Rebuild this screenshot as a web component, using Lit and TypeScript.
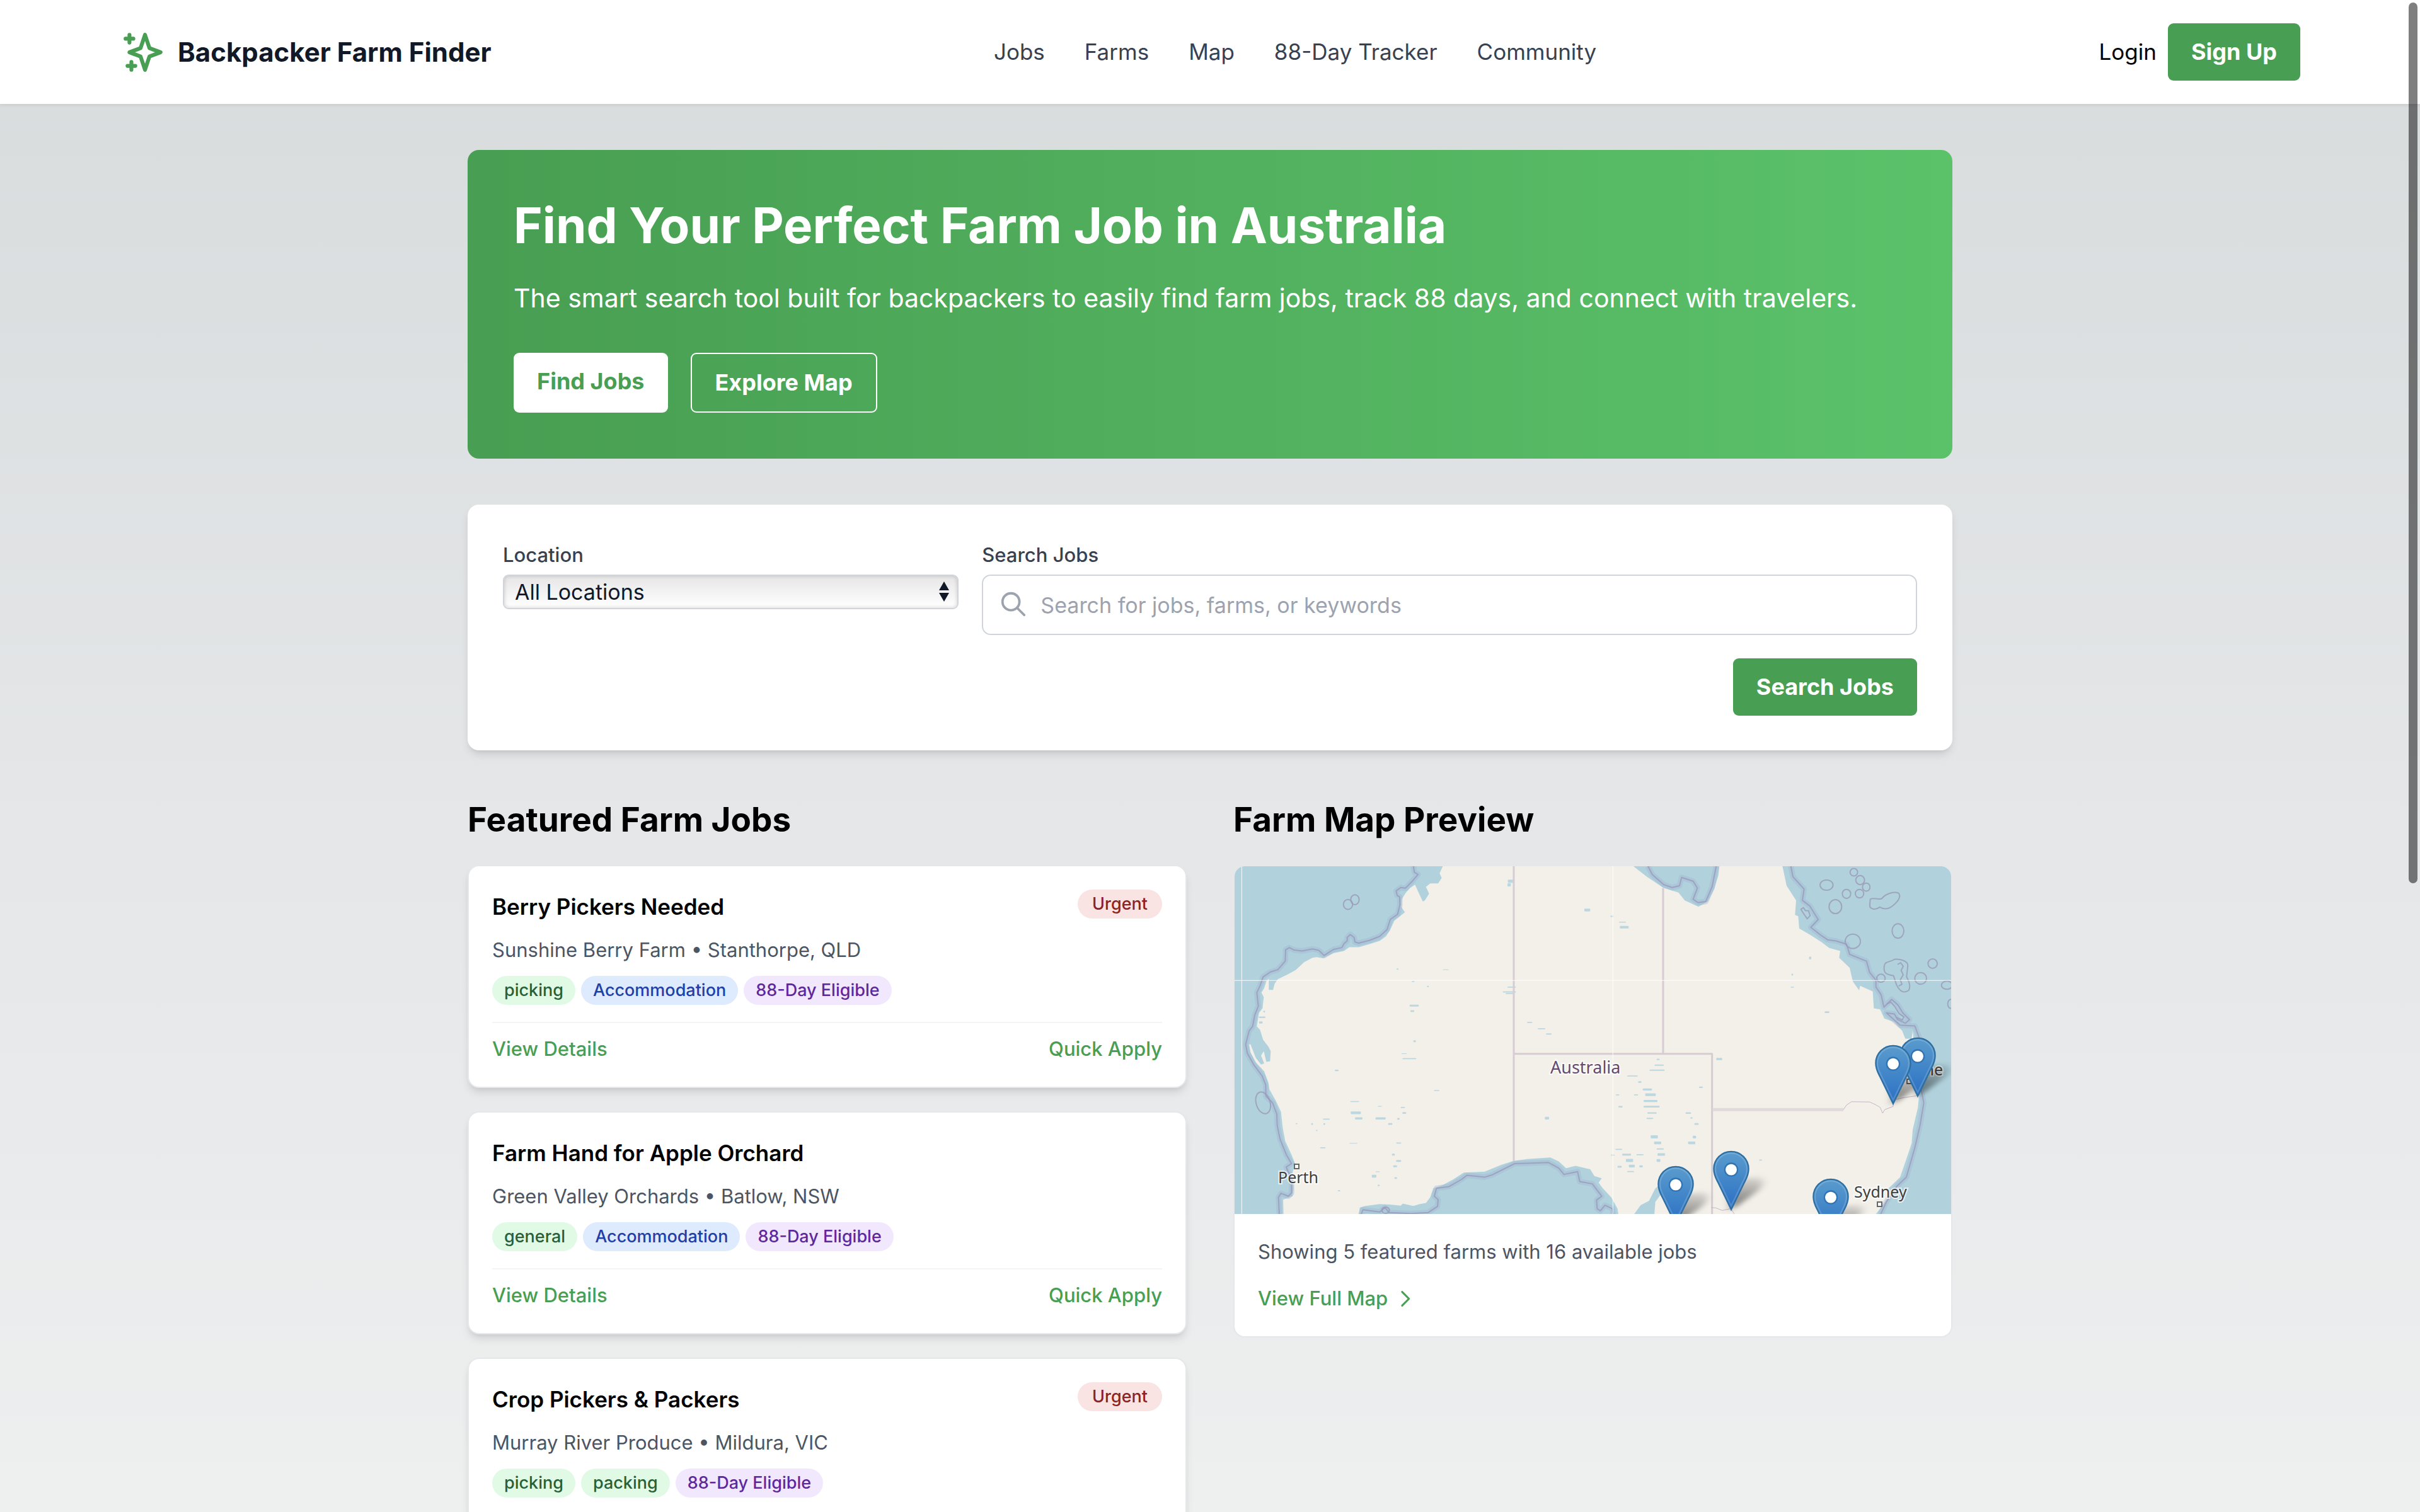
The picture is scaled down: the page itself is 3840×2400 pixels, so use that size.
import { LitElement, html, svg, css } from "lit";
import { customElement, property } from "lit/decorators.js";

type Tone = "green" | "blue" | "purple";

interface Job {
  title: string;
  farm: string;
  place: string;
  tags: { label: string; tone: Tone }[];
  urgent: boolean;
}

const JOBS: Job[] = [
  {
    title: "Berry Pickers Needed",
    farm: "Sunshine Berry Farm",
    place: "Stanthorpe, QLD",
    tags: [
      { label: "picking", tone: "green" },
      { label: "Accommodation", tone: "blue" },
      { label: "88-Day Eligible", tone: "purple" },
    ],
    urgent: true,
  },
  {
    title: "Farm Hand for Apple Orchard",
    farm: "Green Valley Orchards",
    place: "Batlow, NSW",
    tags: [
      { label: "general", tone: "green" },
      { label: "Accommodation", tone: "blue" },
      { label: "88-Day Eligible", tone: "purple" },
    ],
    urgent: false,
  },
  {
    title: "Crop Pickers & Packers",
    farm: "Murray River Produce",
    place: "Mildura, VIC",
    tags: [
      { label: "picking", tone: "green" },
      { label: "packing", tone: "green" },
      { label: "88-Day Eligible", tone: "purple" },
    ],
    urgent: true,
  },
];

const NAV = ["Jobs", "Farms", "Map", "88-Day Tracker", "Community"];

@customElement("site-header")
export class SiteHeader extends LitElement {
  static styles = css`
    :host {
      display: block;
      position: relative;
      background: #fff;
      box-shadow: 0 2px 5px rgba(0, 0, 0, 0.08);
    }
    .bar {
      display: flex;
      align-items: center;
      justify-content: space-between;
      padding: 37px 190px;
      font-size: 35px;
      line-height: 55px;
    }
    a {
      color: inherit;
      text-decoration: none;
    }
    .brand {
      display: flex;
      align-items: center;
      gap: 18px;
      font-size: 42px;
      font-weight: 700;
      color: #111827;
    }
    .brand svg {
      width: 74px;
      height: 74px;
      color: #489e52;
    }
    nav {
      display: flex;
      gap: 63px;
      color: #374151;
    }
    .account {
      display: flex;
      align-items: center;
      gap: 18px;
      color: #000;
    }
    .signup {
      padding: 18px 37px;
      border-radius: 9px;
      background: #489e52;
      color: #fff;
      font-size: 36px;
      font-weight: 700;
    }
  `;

  render() {
    return html`
      <header class="bar">
        <a class="brand" href="#">
          <svg viewBox="0 0 24 24" fill="none" stroke="currentColor" stroke-width="2" stroke-linecap="round" stroke-linejoin="round" aria-hidden="true">
            <path d="M5 3v4M3 5h4M6 17v4m-2-2h4m5-16l2.286 6.857L21 12l-5.714 2.143L13 21l-2.286-6.857L5 12l5.714-2.143L13 3z" />
          </svg>
          <span>Backpacker Farm Finder</span>
        </a>
        <nav>${NAV.map((item) => html`<a href="#">${item}</a>`)}</nav>
        <div class="account">
          <a href="#">Login</a>
          <a class="signup" href="#">Sign Up</a>
        </div>
      </header>
    `;
  }
}

@customElement("job-card")
export class JobCard extends LitElement {
  static styles = css`
    :host {
      display: block;
      padding: 37px;
      border: 2px solid #e5e7eb;
      border-radius: 18px;
      background: #fff;
      box-shadow: 0 9px 14px -2px rgba(0, 0, 0, 0.1), 0 5px 9px -5px rgba(0, 0, 0, 0.1);
    }
    .top {
      display: flex;
      align-items: flex-start;
      justify-content: space-between;
    }
    h3 {
      margin: 0 0 18px;
      font-size: 35px;
      line-height: 55px;
      font-weight: 600;
      color: #000;
    }
    .where {
      margin: 0 0 18px;
      font-size: 31px;
      line-height: 46px;
      color: #4b5563;
    }
    .tags {
      display: flex;
      gap: 9px;
    }
    .tag {
      padding: 0 19px;
      border-radius: 23px;
      font-size: 27px;
      line-height: 46px;
      font-weight: 500;
    }
    .urgent {
      padding: 0 23px;
      background: #fae3e3;
      color: #8f2222;
    }
    .green {
      background: #e1fae6;
      color: #276139;
    }
    .blue {
      background: #deeafd;
      color: #1e40a8;
    }
    .purple {
      background: #f1e8fe;
      color: #5e289c;
    }
    .actions {
      display: flex;
      justify-content: space-between;
      margin-top: 27px;
      padding-top: 18px;
      border-top: 2px solid #f3f4f6;
      font-size: 31px;
      line-height: 46px;
      font-weight: 500;
    }
    .actions a,
    .actions button {
      padding: 0;
      border: 0;
      background: none;
      font: inherit;
      color: #489e52;
      text-decoration: none;
      cursor: pointer;
    }
  `;

  @property({ attribute: false }) job!: Job;

  render() {
    const { title, farm, place, tags, urgent } = this.job;
    return html`
      <div class="top">
        <h3>${title}</h3>
        ${urgent ? html`<span class="tag urgent">Urgent</span>` : null}
      </div>
      <p class="where">${farm} • ${place}</p>
      <div class="tags">${tags.map((t) => html`<span class="tag ${t.tone}">${t.label}</span>`)}</div>
      <div class="actions">
        <a href="#">View Details</a>
        <button type="button">Quick Apply</button>
      </div>
    `;
  }
}

// Chart units: 3 per pixel across, 2.8 per pixel down, origin at (9, 8).
const LAND =
  "M1000 8 985 40 995 60 978 85 940 85 920 100 935 130 915 160 905 165 885 125 868 90 845 105 825 125 805 155 803 190 820 213 790 235 770 250 750 290 730 320 700 340 650 355 600 368 555 368 530 385 480 395 430 417 400 412 380 415 340 435 300 470 260 490 215 510 200 530 192 558 172 558 172 508 160 520 150 550 137 570 148 590 142 640 125 660 115 720 130 735 145 780 170 810 181 830 178 875 160 878 148 830 135 850 150 885 135 890 110 860 85 800 78 800 85 835 110 880 150 920 170 970 175 1000 205 1050 230 1100 238 1170 250 1230 280 1290 297 1330 285 1370 290 1440 285 1475 240 1490 242 1560 600 1560 605 1525 630 1518 700 1510 750 1512 800 1517 810 1508 860 1518 890 1510 920 1505 940 1480 955 1440 1000 1425 1050 1400 1100 1370 1200 1366 1227 1355 1280 1335 1337 1318 1402 1310 1512 1303 1552 1320 1587 1350 1632 1340 1702 1355 1722 1385 1757 1395 1742 1415 1762 1440 1802 1480 1832 1530 1837 1560 1907 1560 1942 1515 1982 1495 2012 1440 2032 1425 2052 1450 2012 1500 2007 1560 3057 1560 3082 1530 3112 1490 3122 1440 3177 1390 3207 1310 3232 1240 3237 1180 3262 1080 3267 1030 3262 1000 3242 900 3242 780 3237 740 3232 775 3202 775 3187 740 3147 700 3102 685 3082 645 3052 640 3047 565 3012 550 2987 540 2982 560 2952 520 2937 460 2887 415 2892 385 2840 372 2802 345 2752 315 2697 285 2692 230 2677 225 2682 160 2637 95 2617 8 2317 8 2312 50 2292 110 2262 165 2217 188 2152 160 2122 125 2052 105 1972 55 1907 8Z";

const SEA_LIMITS = [
  "M860 8 865 35 882 45 850 80 822 106 800 103 778 118 783 138 795 145 796 180 785 222 750 245 735 290 700 320 650 338 600 350 582 345 578 325 560 312 545 325 545 340 530 352 520 370 480 378 435 405 410 382 380 376 330 385 290 380 270 370 252 380 250 430 215 468 180 478 145 500 130 540 115 570 122 630 105 670 95 720 78 740 62 800 70 840 100 890 140 940 157 980 158 1030 190 1060 210 1110 212 1160 225 1220 255 1290 280 1330 255 1345 262 1362 280 1390 280 1460 265 1475 230 1462 218 1480 222 1560",
  "M610 1560 620 1535 700 1545 725 1525 745 1548 850 1552 930 1548 975 1520 978 1490 960 1475 970 1440 1030 1432 1090 1400 1115 1382 1200 1390 1235 1380 1342 1330 1420 1328 1502 1325 1552 1350 1577 1378 1642 1366 1652 1410 1712 1420 1757 1475 1732 1492 1735 1530 1750 1540 1772 1515 1807 1530 1812 1560",
  "M1977 8 1997 45 2052 90 2092 103 2127 95 2137 58 2192 75 2212 105 2192 155 2215 170 2252 165 2282 100 2302 8",
  "M2657 8 2667 55 2720 110 2712 160 2747 185 2787 245 2752 280 2800 315 2832 335 2872 340 2922 355 2937 400 3017 430 3032 480 3062 515 3062 545 3087 580 3100 635 3137 600 3167 625 3190 660 3222 690 3202 706 3165 690 3150 665 3112 660 3177 715 3247 718 3270 775 3277 1000 3290 1060 3272 1160 3247 1260 3207 1390 3162 1430 3112 1500 3082 1560",
];

// Reef and island outlines: cx, cy, rx, ry.
const REEFS: [number, number, number, number][] = [
  [2957, 35, 18, 17], [2987, 70, 21, 20], [3016, 101, 18, 18], [2984, 130, 20, 19],
  [2922, 131, 20, 20], [2827, 92, 31, 23], [2869, 188, 30, 31], [3167, 296, 28, 32],
  [2952, 342, 36, 32], [3086, 506, 20, 18], [3332, 441, 22, 21], [3275, 507, 28, 26],
  [3400, 537, 26, 18], [3418, 620, 14, 20], [549, 178, 22, 22], [582, 157, 20, 22],
  [728, 1537, 18, 14],
];

// Inland lakes: x, y, width, height.
const LAKES: [number, number, number, number][] = [
  [780, 463, 9, 5], [1000, 467, 28, 3], [852, 519, 14, 4], [925, 540, 9, 6], [842, 624, 44, 8],
  [846, 648, 18, 8], [860, 782, 12, 8], [803, 840, 26, 3], [808, 861, 66, 5], [486, 913, 18, 6],
  [560, 1052, 42, 4], [562, 1098, 48, 12], [582, 1124, 36, 10], [680, 1124, 48, 10], [690, 1074, 20, 3],
  [740, 1150, 20, 8], [800, 1078, 20, 5], [808, 1101, 18, 8], [783, 1127, 12, 8], [430, 1130, 32, 5],
  [432, 1150, 8, 8], [374, 1150, 8, 8], [300, 1150, 8, 5], [396, 1180, 8, 5], [416, 1257, 26, 5],
  [556, 1238, 38, 3], [778, 1236, 24, 5], [758, 1286, 14, 8], [778, 1314, 24, 8], [764, 1338, 18, 8],
  [770, 1390, 12, 8], [662, 1380, 22, 12], [680, 1364, 20, 4], [690, 1424, 10, 6], [500, 1448, 12, 5],
  [958, 1003, 26, 4], [124, 676, 32, 7], [126, 698, 16, 10], [146, 650, 8, 8],
  [1310, 68, 26, 14], [1308, 84, 16, 14], [1674, 197, 28, 12], [1798, 228, 16, 6], [1838, 255, 34, 4],
  [1843, 274, 42, 11], [1308, 543, 40, 5], [1286, 564, 62, 6], [1300, 572, 36, 5],
  [1402, 700, 24, 5], [1452, 728, 36, 5], [1492, 751, 26, 6], [1486, 1122, 20, 12],
  [2302, 860, 28, 10], [2018, 864, 14, 6], [2008, 890, 44, 5], [1984, 912, 72, 6], [1878, 938, 50, 5],
  [1930, 964, 16, 7], [1952, 996, 44, 9], [1964, 1018, 50, 12], [1956, 1047, 66, 9], [1956, 1073, 76, 8],
  [1974, 1102, 44, 6], [1970, 1126, 32, 6], [1836, 1074, 20, 7], [1824, 1022, 16, 5], [1910, 1022, 20, 5],
  [2156, 1102, 26, 7], [2178, 1124, 12, 6], [2198, 1150, 20, 8], [2190, 1206, 16, 12], [2168, 1232, 34, 12],
  [2220, 988, 18, 6], [1990, 1204, 34, 14], [2006, 1232, 34, 12], [2018, 1262, 34, 6], [2022, 1284, 36, 11],
  [2018, 1310, 18, 12], [1822, 1264, 32, 5], [1854, 1286, 42, 8], [1872, 1309, 34, 14], [1886, 1335, 28, 12],
  [1832, 1340, 20, 8], [1936, 1338, 16, 9], [1922, 1288, 34, 5], [1878, 1363, 32, 5], [1800, 1290, 18, 4],
  [2660, 486, 8, 8], [2656, 544, 16, 4], [2818, 653, 22, 8], [2744, 410, 10, 12], [2506, 1312, 14, 5],
];

// Pin tips in map pixels, back to front.
const PINS: [number, number][] = [
  [1084, 366], [1045, 378], [788, 546], [946, 590], [700, 570],
];

@customElement("farm-map")
export class FarmMap extends LitElement {
  static styles = css`
    :host {
      display: block;
      background: #b1d2dd;
    }
    svg {
      display: block;
      width: 100%;
      height: 552px;
    }
    .land {
      fill: #f3f0ea;
    }
    .shelf,
    .limit,
    .state,
    .seam {
      fill: none;
      vector-effect: non-scaling-stroke;
      stroke-linejoin: round;
    }
    .shelf {
      stroke: #9fb2d0;
      stroke-width: 9px;
      opacity: 0.35;
    }
    .limit {
      stroke: #9a9ab8;
      stroke-width: 2px;
      opacity: 0.8;
    }
    .state {
      stroke: #d7ccd3;
      stroke-width: 3px;
    }
    .state.wide {
      stroke: #e0dadd;
      stroke-width: 5px;
    }
    .state.thin {
      stroke: #c6b5c6;
      stroke-width: 1px;
    }
    .lake {
      fill: #b1d2dd;
      opacity: 0.85;
    }
    .seam {
      stroke: #fff;
      stroke-width: 1px;
      opacity: 0.9;
    }
    .town {
      fill: #fff;
      stroke: #666;
      stroke-width: 2px;
    }
    text {
      font-family: "Noto Sans", "Open Sans", sans-serif;
      font-size: 25px;
      fill: #3f3f3f;
      stroke: #fff;
      stroke-opacity: 0.7;
      stroke-width: 4px;
      paint-order: stroke;
    }
    .country {
      font-size: 27px;
      fill: #654a70;
    }
  `;

  private pin([x, y]: [number, number]) {
    return svg`<g transform="translate(${x} ${y}) scale(2.3)">
      <path d="M-12 -28.5A12 12 0 0 1 12 -28.5C12 -24 10 -21 9 -19L0 -.5L-9 -19C-10 -21 -12 -24 -12 -28.5Z" fill="url(#pin)" stroke="#2d6fa3" stroke-width="1" />
      <path d="M-10.9 -28.5A10.9 10.9 0 0 1 10.9 -28.5C10.9 -24.5 9 -21.5 8 -19.5L0 -3L-8 -19.5C-9 -21.5 -10.9 -24.5 -10.9 -28.5Z" fill="none" stroke="#fff" stroke-opacity=".16" stroke-width="1" />
      <circle cx="0" cy="-28" r="4.4" fill="#fff" stroke="#2f74b4" stroke-width="1" />
    </g>`;
  }

  private shadow([x, y]: [number, number]) {
    return svg`<path transform="translate(${x} ${y}) scale(2.3) skewX(-34) scale(.9 .6)" d="M0 0L-9 -19C-13 -27 -10 -38 0 -38S13 -27 9 -19Z" fill="url(#shade)" filter="url(#soft)" />`;
  }

  render() {
    return html`
      <svg viewBox="0 0 1137 552" preserveAspectRatio="xMidYMid slice" role="img" aria-label="Map of featured farms">
        <defs>
          <linearGradient id="pin" x1="0" y1="0" x2="0" y2="1">
            <stop offset="0" stop-color="#5a9ccd" />
            <stop offset="1" stop-color="#2a6fc4" />
          </linearGradient>
          <linearGradient id="shade" x1="0" y1="1" x2="0" y2="0">
            <stop offset="0" stop-color="#000" stop-opacity=".55" />
            <stop offset="1" stop-color="#000" stop-opacity=".1" />
          </linearGradient>
          <filter id="soft" x="-50%" y="-50%" width="200%" height="200%">
            <feGaussianBlur stdDeviation="3" />
          </filter>
        </defs>
        <g transform="translate(-3 -3) scale(.33333 .35714)">
          <path class="land" d=${LAND} />
          ${LAKES.map(([x, y, w, h]) => svg`<rect class="lake" x=${x} y=${y} width=${w} height=${h} rx="3" />`)}
          <path class="state" d="M1338 8V1318M2049 105V842M1338 842H2282V1560" />
          <path class="state wide" d="M2285 1090H2907" />
          <path class="state thin" d="M2907 1090 2922 1070 2945 1055 3032 1056 3060 1068 3082 1080 3094 1106 3104 1090 3144 1076 3147 1046 3200 1036 3262 1028M2277 1525 2300 1527 2330 1538 2372 1530 2392 1560" />
          ${SEA_LIMITS.map((d) => svg`<path class="shelf" d=${d} /><path class="limit" d=${d} />`)}
          ${REEFS.map(([cx, cy, rx, ry]) => svg`<ellipse class="limit" cx=${cx} cy=${cy} rx=${rx} ry=${ry} />`)}
          <ellipse class="limit" cx="145" cy="1060" rx="33" ry="50" transform="rotate(-20 145 1060)" />
          <path class="limit" d="M3035 155C3050 145 3070 160 3090 152 3110 128 3150 120 3170 128 3185 145 3165 165 3150 178 3120 205 3095 198 3080 190 3060 205 3030 200 3033 180Z" />
          <path class="limit" d="M3102 450C3105 430 3130 435 3150 422 3175 420 3215 428 3214 450L3208 500C3220 520 3228 545 3218 560 3195 575 3175 565 3160 535L3146 495C3120 490 3095 490 3102 450Z" />
          <path class="limit" d="M3165 445l15 -8 12 16 -10 18 10 20 -14 22 8 20 -16 8M2705 200l12 -8 10 14 14 0 8 22 -14 14 -12 -16ZM3115 620l18 -8 20 22 20 30 22 14 -8 14 -28 -12" opacity=".4" />
          <path class="seam" d="M43 8V1560M1810 8V1560M9 516H3430" />
        </g>
        <rect class="town" x="95" y="473" width="7" height="7" />
        <rect class="town" x="1020" y="533" width="7" height="7" />
        <rect class="town" x="1067" y="338" width="7" height="7" />
        <text class="country" x="501" y="329">Australia</text>
        <text x="69" y="503">Perth</text>
        <text x="983" y="526">Sydney</text>
        <text x="1124" y="332" text-anchor="end">ne</text>
        ${PINS.map((p) => this.shadow(p))} ${PINS.map((p) => this.pin(p))}
      </svg>
    `;
  }
}

@customElement("app-root")
export class AppRoot extends LitElement {
  static styles = css`
    * {
      box-sizing: border-box;
    }
    :host {
      display: block;
      min-height: 100vh;
      background: linear-gradient(#d7dbdc 0%, #e4e6e8 52vh, #eeefef 100vh);
      font-family: Inter, "Liberation Sans", sans-serif;
      color: #000;
    }
    main {
      display: flex;
      flex-direction: column;
      gap: 73px;
      max-width: 2356px;
      margin: 0 auto;
      padding: 73px 0;
    }
    a {
      text-decoration: none;
    }
    .hero {
      padding: 73px;
      border-radius: 18px;
      background: linear-gradient(90deg, #489e52, #5bc26a);
      color: #fff;
    }
    h1 {
      margin: 0 0 37px;
      font-size: 78px;
      line-height: 93px;
      font-weight: 700;
    }
    .lead {
      margin: 0 0 55px;
      font-size: 41px;
      line-height: 64px;
    }
    .choices {
      display: flex;
      gap: 36px;
    }
    .button {
      padding: 18px 37px;
      border: 0;
      border-radius: 9px;
      background: #489e52;
      color: #fff;
      font-family: inherit;
      font-size: 36px;
      line-height: 55px;
      font-weight: 700;
    }
    .button.light {
      background: #fff;
      color: #489e52;
    }
    .button.outline {
      border: 2px solid #fff;
      background: none;
    }
    .search {
      display: grid;
      grid-template-columns: repeat(3, 1fr);
      gap: 37px;
      padding: 55px 56px;
      border-radius: 18px;
      background: #fff;
      box-shadow: 0 9px 14px -2px rgba(0, 0, 0, 0.1), 0 5px 9px -5px rgba(0, 0, 0, 0.1);
    }
    label {
      display: block;
      margin-bottom: 7px;
      font-size: 31px;
      line-height: 49px;
      font-weight: 500;
      color: #374151;
    }
    .keywords {
      grid-column: span 2;
    }
    .field {
      position: relative;
      display: flex;
    }
    .field svg {
      position: absolute;
      pointer-events: none;
    }
    select {
      appearance: none;
      width: 100%;
      height: 55px;
      padding: 0 46px 0 17px;
      border: 2px solid #d1d5db;
      border-radius: 9px;
      background: linear-gradient(#e6e6e6, #fff);
      box-shadow: inset 0 0 6px rgba(0, 0, 0, 0.18);
      font-family: inherit;
      font-size: 34px;
      color: #111827;
    }
    .arrows {
      right: 14px;
      top: 10px;
      width: 18px;
      height: 34px;
    }
    input {
      width: 100%;
      height: 96px;
      padding: 0 37px 0 91px;
      border: 2px solid #d1d5db;
      border-radius: 14px;
      font-family: inherit;
      font-size: 34px;
    }
    input::placeholder {
      color: #9ca3af;
      opacity: 1;
    }
    .lens {
      left: 27px;
      top: 24px;
      width: 46px;
      height: 46px;
      color: #9ca3af;
    }
    .submit {
      grid-column: 1 / -1;
      justify-self: end;
    }
    .columns {
      display: grid;
      grid-template-columns: 1fr 1fr;
      align-items: start;
      gap: 74px;
    }
    h2 {
      margin: 0 0 35px;
      font-size: 53px;
      line-height: 74px;
      font-weight: 700;
    }
    .jobs {
      display: grid;
      gap: 37px;
    }
    .map {
      overflow: hidden;
      border: 2px solid #e5e7eb;
      border-radius: 18px;
      background: #fff;
    }
    .summary {
      display: grid;
      gap: 28px;
      padding: 37px;
      font-size: 31px;
      line-height: 46px;
    }
    .summary p {
      margin: 0;
      color: #4b5563;
    }
    .summary a {
      display: flex;
      align-items: center;
      gap: 9px;
      font-weight: 500;
      color: #489e52;
    }
    .summary svg {
      width: 37px;
      height: 37px;
    }
    .thumb {
      position: fixed;
      top: 4px;
      right: 4px;
      width: 14px;
      height: 58.25vh;
      border-radius: 7px;
      background: rgba(0, 0, 0, 0.5);
    }
  `;

  render() {
    return html`
      <site-header></site-header>
      <main>
        <section class="hero">
          <h1>Find Your Perfect Farm Job in Australia</h1>
          <p class="lead">
            The smart search tool built for backpackers to easily find farm jobs, track 88 days, and connect with travelers.
          </p>
          <div class="choices">
            <a class="button light" href="#">Find Jobs</a>
            <a class="button outline" href="#">Explore Map</a>
          </div>
        </section>

        <form class="search" @submit=${(e: Event) => e.preventDefault()}>
          <div>
            <label for="location">Location</label>
            <div class="field">
              <select id="location">
                <option>All Locations</option>
              </select>
              <svg class="arrows" viewBox="0 0 18 34" aria-hidden="true"><path d="M9 1l8 14H1zM9 33l8-14H1z" fill="#111827" /></svg>
            </div>
          </div>
          <div class="keywords">
            <label for="keywords">Search Jobs</label>
            <div class="field">
              <input id="keywords" type="text" placeholder="Search for jobs, farms, or keywords" />
              <svg class="lens" viewBox="0 0 24 24" fill="none" stroke="currentColor" stroke-width="2" stroke-linecap="round" aria-hidden="true">
                <path d="M21 21l-6-6m2-5a7 7 0 11-14 0 7 7 0 0114 0z" />
              </svg>
            </div>
          </div>
          <button class="button submit" type="submit">Search Jobs</button>
        </form>

        <div class="columns">
          <section>
            <h2>Featured Farm Jobs</h2>
            <div class="jobs">${JOBS.map((job) => html`<job-card .job=${job}></job-card>`)}</div>
          </section>
          <section>
            <h2>Farm Map Preview</h2>
            <div class="map">
              <farm-map></farm-map>
              <div class="summary">
                <p>Showing 5 featured farms with 16 available jobs</p>
                <a href="#">
                  View Full Map
                  <svg viewBox="0 0 24 24" fill="none" stroke="currentColor" stroke-width="2" stroke-linecap="round" stroke-linejoin="round" aria-hidden="true">
                    <path d="M9 5l7 7-7 7" />
                  </svg>
                </a>
              </div>
            </div>
          </section>
        </div>
      </main>
      <div class="thumb"></div>
    `;
  }
}
